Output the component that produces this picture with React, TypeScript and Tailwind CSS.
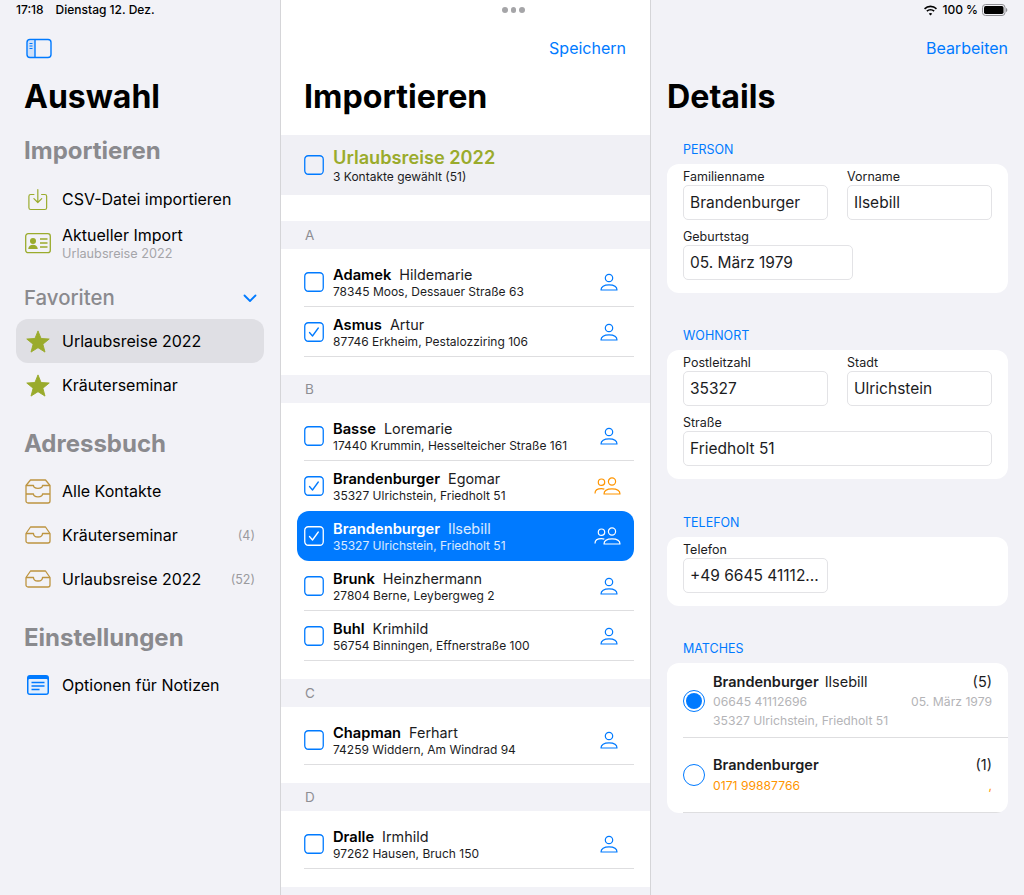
import { ReactNode } from "react";

const BLUE = "#007aff";

function SidebarToggleIcon() {
  return (
    <svg width="26" height="21" viewBox="0 0 26 21" fill="none">
      <rect x="1" y="1.5" width="24" height="18" rx="3" stroke={BLUE} strokeWidth="1.4" />
      <path d="M9 1.5v18" stroke={BLUE} strokeWidth="1.4" />
      <path d="M1.5 3h7.5v16H4a2.5 2.5 0 0 1-2.5-2.5z" fill={BLUE} fillOpacity="0.14" />
      <path d="M3.5 5.5h3M3.5 8h3M3.5 10.5h3" stroke={BLUE} strokeWidth="1.2" />
    </svg>
  );
}

function ImportIcon() {
  return (
    <svg width="20" height="23" viewBox="0 0 22 24" fill="none" stroke="#9aab2c" strokeWidth="1.300">
      <path d="M7 6.5H3a2 2 0 0 0-2 2V21a2 2 0 0 0 2 2h15.500a2 2 0 0 0 2-2V8.500a2 2 0 0 0-2-2H14.500" />
      <path d="M10.800 1v14M6.500 11l4.300 4.300 4.300-4.300" strokeLinecap="round" strokeLinejoin="round" />
    </svg>
  );
}

function CardIcon() {
  return (
    <svg width="26" height="21" viewBox="0 0 26 21" fill="none">
      <rect x="0.700" y="0.700" width="24.600" height="19" rx="2.500" stroke="#9aab2c" strokeWidth="1.300" />
      <circle cx="8" cy="8" r="3" fill="#9aab2c" />
      <path d="M3.200 16c.4-3 2.300-4.200 4.800-4.200s4.400 1.200 4.800 4.200z" fill="#9aab2c" />
      <path d="M15 6h7.500M15 10h7.500M15 14h7.500" stroke="#9aab2c" strokeWidth="1.300" />
    </svg>
  );
}

function StarIcon() {
  return (
    <svg width="24" height="23" viewBox="0 0 26 25">
      <path
        d="M13 1l3.300 8.200 8.900.6-6.900 5.600 2.300 8.600L13 19.200l-7.600 4.800 2.300-8.600L.8 9.800l8.900-.6z"
        fill="#9aab2c"
        stroke="#9aab2c"
        strokeLinejoin="round"
      />
    </svg>
  );
}

function TrayIcon() {
  return (
    <svg width="26" height="18" viewBox="0 0 26 18" fill="none" stroke="#bd9440" strokeWidth="1.300" strokeLinejoin="round">
      <path d="M5.500 1h15l4.500 6.500V15a2 2 0 0 1-2 2H3a2 2 0 0 1-2-2V7.500z" />
      <path d="M1 7.500h7.500c0 2.200 2 3.500 4.500 3.500s4.500-1.300 4.500-3.500H25" />
    </svg>
  );
}

function DoubleTrayIcon() {
  return (
    <svg width="26" height="25" viewBox="0 0 26 25" fill="none" stroke="#bd9440" strokeWidth="1.300" strokeLinejoin="round">
      <path d="M5.500 1h15L25 6.500V22a2 2 0 0 1-2 2H3a2 2 0 0 1-2-2V6.500z" />
      <path d="M1 6.500h7.500c0 1.800 2 2.800 4.500 2.800s4.500-1 4.500-2.800H25" />
      <path d="M1 15h7.500c0 1.800 2 2.800 4.500 2.800s4.500-1 4.500-2.800H25" />
    </svg>
  );
}

function NotesIcon() {
  return (
    <svg width="22" height="20" viewBox="0 0 22 20" fill="none">
      <rect x="0" y="0" width="22" height="20" rx="3" fill={BLUE} />
      <rect x="1.500" y="4" width="19" height="14.500" rx="1" fill="#e3effd" />
      <path d="M4.500 7.500h13M4.500 11h13M4.500 14.500h8" stroke={BLUE} strokeWidth="1.300" />
    </svg>
  );
}

function PersonIcon() {
  return (
    <svg width="18" height="18" viewBox="0 0 18 18" fill="none" stroke={BLUE} strokeWidth="1.200">
      <circle cx="9" cy="5" r="3.700" />
      <path d="M1 17c0-3.300 3-5.200 8-5.200s8 1.900 8 5.200z" strokeLinejoin="round" />
    </svg>
  );
}

function PeopleIcon({ color }: { color: string }) {
  return (
    <svg width="28" height="18" viewBox="0 0 28 18" fill="none" stroke={color} strokeWidth="1.200" strokeLinejoin="round">
      <circle cx="7.500" cy="5.200" r="3.200" />
      <circle cx="18" cy="4.500" r="3.600" />
      <path d="M1 16.500c0-3 2.300-4.800 6.500-4.800 1 0 2 .1 2.800.4" />
      <path d="M10 17c0-3.200 3-5.200 8-5.200s8 2 8 5.200z" />
    </svg>
  );
}

function Checkbox({ checked, light }: { checked?: boolean; light?: boolean }) {
  const color = light ? "#ffffff" : BLUE;
  return (
    <svg width="20" height="20" viewBox="0 0 20 20" fill="none" className="shrink-0">
      <rect x="0.750" y="0.750" width="18.500" height="18.500" rx="3.500" stroke={color} strokeWidth="1.300" />
      {checked && <path d="M5.500 10.500l3 3.500 5.800-8" stroke={color} strokeWidth="1.300" strokeLinecap="round" strokeLinejoin="round" />}
    </svg>
  );
}

function SidebarHeading({ children, className }: { children: ReactNode; className: string }) {
  return <h2 className={`text-[24px] leading-[30px] font-bold text-[#8a8a8e] ${className}`}>{children}</h2>;
}

function SidebarRow({
  icon,
  label,
  sub,
  count,
  active,
}: {
  icon: ReactNode;
  label: string;
  sub?: string;
  count?: string;
  active?: boolean;
}) {
  return (
    <div className={`flex h-11 items-center rounded-xl pr-[9px] ${active ? "bg-[#dfdfe4]" : ""}`}>
      <div className="flex w-11 shrink-0 justify-center">{icon}</div>
      <div className="ml-0.5 min-w-0 flex-1">
        <div className="text-[16px] leading-[20px] text-black">{label}</div>
        {sub && <div className="mt-[1px] text-[12.700px] leading-[15px] text-[#a5a5a9]">{sub}</div>}
      </div>
      {count && <span className="mt-[2px] text-[12.500px] text-[#9a9a9e]">{count}</span>}
    </div>
  );
}

function Sidebar() {
  return (
    <aside className="h-[895px] w-[281px] shrink-0 border-r border-[#d5d5d8] bg-[#f2f2f7]">
      <div className="flex h-5 items-center gap-3 pl-4 text-[12px] font-medium text-black">
        <span>17:18</span>
        <span>Dienstag 12. Dez.</span>
      </div>
      <div className="mt-[18px] pl-[26px]">
        <SidebarToggleIcon />
      </div>
      <h1 className="mt-4 pl-6 text-[32px] leading-[44px] font-bold text-black">Auswahl</h1>
      <div className="px-4">
        <div className="pl-2">
          <SidebarHeading className="mt-[17px]">Importieren</SidebarHeading>
        </div>
        <div className="mt-[11px]">
          <SidebarRow icon={<ImportIcon />} label="CSV-Datei importieren" />
          <SidebarRow icon={<CardIcon />} label="Aktueller Import" sub="Urlaubsreise 2022" />
        </div>
        <div className="mt-[19px] flex h-[28px] items-center justify-between pl-2 pr-[7px]">
          <span className="text-[20.400px] font-medium text-[#8a8a8e]">Favoriten</span>
          <svg width="14" height="9" viewBox="0 0 14 9" fill="none">
            <path d="M1.500 1.500L7 7l5.500-5.500" stroke={BLUE} strokeWidth="1.800" strokeLinecap="round" strokeLinejoin="round" />
          </svg>
        </div>
        <div className="mt-[7px]">
          <SidebarRow icon={<StarIcon />} label="Urlaubsreise 2022" active />
          <SidebarRow icon={<StarIcon />} label="Kräuterseminar" />
        </div>
        <div className="pl-2">
          <SidebarHeading className="mt-[22px]">Adressbuch</SidebarHeading>
        </div>
        <div className="mt-[10px]">
          <SidebarRow icon={<DoubleTrayIcon />} label="Alle Kontakte" />
          <SidebarRow icon={<TrayIcon />} label="Kräuterseminar" count="(4)" />
          <SidebarRow icon={<TrayIcon />} label="Urlaubsreise 2022" count="(52)" />
        </div>
        <div className="pl-2">
          <SidebarHeading className="mt-[22px]">Einstellungen</SidebarHeading>
        </div>
        <div className="mt-[10px]">
          <SidebarRow icon={<NotesIcon />} label="Optionen für Notizen" />
        </div>
      </div>
    </aside>
  );
}

type Contact = {
  last: string;
  first: string;
  address: string;
  checked?: boolean;
  selected?: boolean;
  people?: boolean;
  noDivider?: boolean;
};

const groups: { letter: string; contacts: Contact[] }[] = [
  {
    letter: "A",
    contacts: [
      { last: "Adamek", first: "Hildemarie", address: "78345 Moos, Dessauer Straße 63" },
      { last: "Asmus", first: "Artur", address: "87746 Erkheim, Pestalozziring 106", checked: true },
    ],
  },
  {
    letter: "B",
    contacts: [
      { last: "Basse", first: "Loremarie", address: "17440 Krummin, Hesselteicher Straße 161" },
      { last: "Brandenburger", first: "Egomar", address: "35327 Ulrichstein, Friedholt 51", checked: true, people: true, noDivider: true },
      { last: "Brandenburger", first: "Ilsebill", address: "35327 Ulrichstein, Friedholt 51", checked: true, people: true, selected: true, noDivider: true },
      { last: "Brunk", first: "Heinzhermann", address: "27804 Berne, Leybergweg 2" },
      { last: "Buhl", first: "Krimhild", address: "56754 Binningen, Effnerstraße 100" },
    ],
  },
  {
    letter: "C",
    contacts: [{ last: "Chapman", first: "Ferhart", address: "74259 Widdern, Am Windrad 94" }],
  },
  {
    letter: "D",
    contacts: [{ last: "Dralle", first: "Irmhild", address: "97262 Hausen, Bruch 150" }],
  },
];

function ContactRow({ contact }: { contact: Contact }) {
  const { selected } = contact;
  return (
    <div className={`h-[50px] pl-[7px] ${selected ? "rounded-xl bg-[#007aff] text-white" : "text-black"}`}>
      <div className={`flex h-full items-center border-b ${contact.noDivider ? "border-transparent" : "border-[#dedee0]"}`}>
        <Checkbox checked={contact.checked} light={selected} />
        <div className="ml-[9px] min-w-0 flex-1 self-stretch pt-[10px]">
          <div className="flex h-4 items-center gap-2 leading-4">
            <span className="text-[14.700px] font-semibold">{contact.last}</span>
            <span className={`text-[14.400px] ${selected ? "text-white/85" : "text-[#1c1c1e]"}`}>{contact.first}</span>
          </div>
          <div className={`mt-[1px] text-[12px] leading-[15px] ${selected ? "text-white/85" : "text-[#1c1c1e]"}`}>
            {contact.address}
          </div>
        </div>
        {contact.people ? (
          <div className="mr-3">
            <PeopleIcon color={selected ? "#ffffff" : "#ff9500"} />
          </div>
        ) : (
          <div className="mr-4">
            <PersonIcon />
          </div>
        )}
      </div>
    </div>
  );
}

function ImportColumn() {
  return (
    <main className="h-[895px] w-[370px] shrink-0 overflow-hidden border-r border-[#d5d5d8] bg-white">
      <div className="flex h-5 items-center gap-[3px] pl-[221px]">
        <span className="size-[5.500px] rounded-full bg-[#a5a5a8]" />
        <span className="size-[5.500px] rounded-full bg-[#a5a5a8]" />
        <span className="size-[5.500px] rounded-full bg-[#a5a5a8]" />
      </div>
      <div className="mt-[18px] flex h-5 items-center justify-end pr-6 text-[16px] text-[#007aff]">Speichern</div>
      <h1 className="mt-[17px] pl-[23px] text-[32.200px] leading-[44px] font-bold text-black">Importieren</h1>
      <div className="mt-[16px] flex h-[60px] items-center bg-[#f0f0f5] pl-[23px]">
        <Checkbox />
        <div className="ml-[9px]">
          <div className="text-[18.200px] leading-[22px] font-semibold text-[#9aab2c]">Urlaubsreise 2022</div>
          <div className="mt-[1px] text-[12px] leading-[15px] text-[#1c1c1e]">3 Kontakte gewählt (51)</div>
        </div>
      </div>
      <div className="mt-[26px]">
        {groups.map((group) => (
          <section key={group.letter}>
            <div className="flex h-7 items-center bg-[#f2f2f7] pl-[24px] text-[13.500px] text-[#8e8e93]">{group.letter}</div>
            <div className="px-4 pt-2 pb-[18px]">
              {group.contacts.map((contact) => (
                <ContactRow key={contact.last + contact.first} contact={contact} />
              ))}
            </div>
          </section>
        ))}
        <div className="h-7 bg-[#f2f2f7]" />
      </div>
    </main>
  );
}

function Field({ label, value, width }: { label: string; value: string; width: string }) {
  return (
    <div className={width}>
      <div className="h-[15px] text-[12.500px] leading-[15px] text-[#1c1c1e]">{label}</div>
      <div className="mt-[1px] flex h-[35px] items-center overflow-hidden rounded-[5px] border border-[#e3e3e6] bg-white pl-[6px] text-[15.500px] whitespace-nowrap text-[#1c1c1e]">
        {value}
      </div>
    </div>
  );
}

function SectionLabel({ children }: { children: ReactNode }) {
  return <div className="pl-4 text-[12.500px] leading-[14px] text-[#007aff]">{children}</div>;
}

function Card({ children, className }: { children: ReactNode; className: string }) {
  return <div className={`mt-[7px] rounded-xl bg-white ${className}`}>{children}</div>;
}

function DetailsColumn() {
  return (
    <section className="h-[895px] min-w-0 flex-1 bg-[#f2f2f7]">
      <div className="flex h-5 items-center justify-end gap-1 pr-4 text-[12px] font-medium text-black">
        <svg width="15" height="11" viewBox="0 0 15 11" fill="black">
          <path d="M7.500 2.300c2.100 0 4 .8 5.400 2.200l1.100-1.200A9.400 9.400 0 0 0 7.500.6 9.400 9.400 0 0 0 1 3.300l1.100 1.200a7.700 7.700 0 0 1 5.400-2.200z" />
          <path d="M7.500 5.500c1.200 0 2.300.5 3.100 1.300l1.100-1.200a6 6 0 0 0-8.400 0l1.100 1.200c.8-.8 1.900-1.300 3.100-1.300z" />
          <path d="M7.500 8c-.7 0-1.300.3-1.700.7l1.700 1.800 1.700-1.800C8.800 8.300 8.200 8 7.500 8z" />
        </svg>
        <span>100 %</span>
        <svg width="26" height="12" viewBox="0 0 26 12" fill="none">
          <rect x="0.500" y="0.500" width="22.500" height="11" rx="3" stroke="#8e8e93" />
          <rect x="2" y="2" width="19.500" height="8" rx="1.700" fill="black" />
          <path d="M24 4v4c.8-.3 1.300-1.100 1.300-2s-.5-1.700-1.300-2z" fill="#8e8e93" />
        </svg>
      </div>
      <div className="mt-[18px] flex h-5 items-center justify-end pr-4 text-[16px] text-[#007aff]">Bearbeiten</div>
      <h1 className="mt-[17px] pl-4 text-[32.200px] leading-[44px] font-bold text-black">Details</h1>

      <div className="mx-4 mt-[24px]">
        <SectionLabel>PERSON</SectionLabel>
        <Card className="h-[129px] px-4 pt-[5px]">
          <div className="flex gap-[19px]">
            <Field label="Familienname" value="Brandenburger" width="w-[145px]" />
            <Field label="Vorname" value="Ilsebill" width="w-[145px]" />
          </div>
          <div className="mt-[9px]">
            <Field label="Geburtstag" value="05. März 1979" width="w-[170px]" />
          </div>
        </Card>

        <div className="mt-[36px]">
          <SectionLabel>WOHNORT</SectionLabel>
        </div>
        <Card className="h-[129px] px-4 pt-[5px]">
          <div className="flex gap-[19px]">
            <Field label="Postleitzahl" value="35327" width="w-[145px]" />
            <Field label="Stadt" value="Ulrichstein" width="w-[145px]" />
          </div>
          <div className="mt-[9px]">
            <Field label="Straße" value="Friedholt 51" width="w-[309px]" />
          </div>
        </Card>

        <div className="mt-[37px]">
          <SectionLabel>TELEFON</SectionLabel>
        </div>
        <Card className="h-[69px] px-4 pt-[5px]">
          <Field label="Telefon" value="+49 6645 41112..." width="w-[145px]" />
        </Card>

        <div className="mt-[36px]">
          <SectionLabel>MATCHES</SectionLabel>
        </div>
        <Card className="h-[150px] overflow-hidden">
          <div className="ml-4 flex h-[75px] border-b border-[#dedee0] pr-4">
            <div className="flex w-[30px] shrink-0 items-center pt-[2px]">
              <span className="flex size-[22px] items-center justify-center rounded-full border-[1.500px] border-[#007aff]">
                <span className="size-[16px] rounded-full bg-[#007aff]" />
              </span>
            </div>
            <div className="min-w-0 flex-1 pt-[10px]">
              <div className="flex h-[18px] items-center justify-between text-[14.500px] text-[#1c1c1e]">
                <span>
                  <span className="font-semibold">Brandenburger</span>
                  <span className="ml-[6px]">Ilsebill</span>
                </span>
                <span>(5)</span>
              </div>
              <div className="mt-[2px] flex h-[18px] items-center justify-between text-[12.200px] text-[#b4b4b7]">
                <span>06645 41112696</span>
                <span>05. März 1979</span>
              </div>
              <div className="mt-[1px] flex h-[18px] items-center text-[12.200px] text-[#b4b4b7]">35327 Ulrichstein, Friedholt 51</div>
            </div>
          </div>
          <div className="ml-4 flex h-[75px] border-b border-[#dedee0] pr-4">
            <div className="flex w-[30px] shrink-0 items-center">
              <span className="size-[22px] rounded-full border-[1.500px] border-[#007aff]" />
            </div>
            <div className="min-w-0 flex-1 pt-[18px]">
              <div className="flex h-[18px] items-center justify-between text-[14.500px] text-[#1c1c1e]">
                <span className="font-semibold">Brandenburger</span>
                <span>(1)</span>
              </div>
              <div className="mt-[3px] flex h-[18px] items-center justify-between text-[12.200px] text-[#ff9500]">
                <span>0171 99887766</span>
                <span>,</span>
              </div>
            </div>
          </div>
        </Card>
      </div>
    </section>
  );
}

export default function App() {
  return (
    <div className="flex h-[895px] w-[1024px] overflow-hidden font-['Inter',sans-serif]">
      <Sidebar />
      <ImportColumn />
      <DetailsColumn />
    </div>
  );
}
